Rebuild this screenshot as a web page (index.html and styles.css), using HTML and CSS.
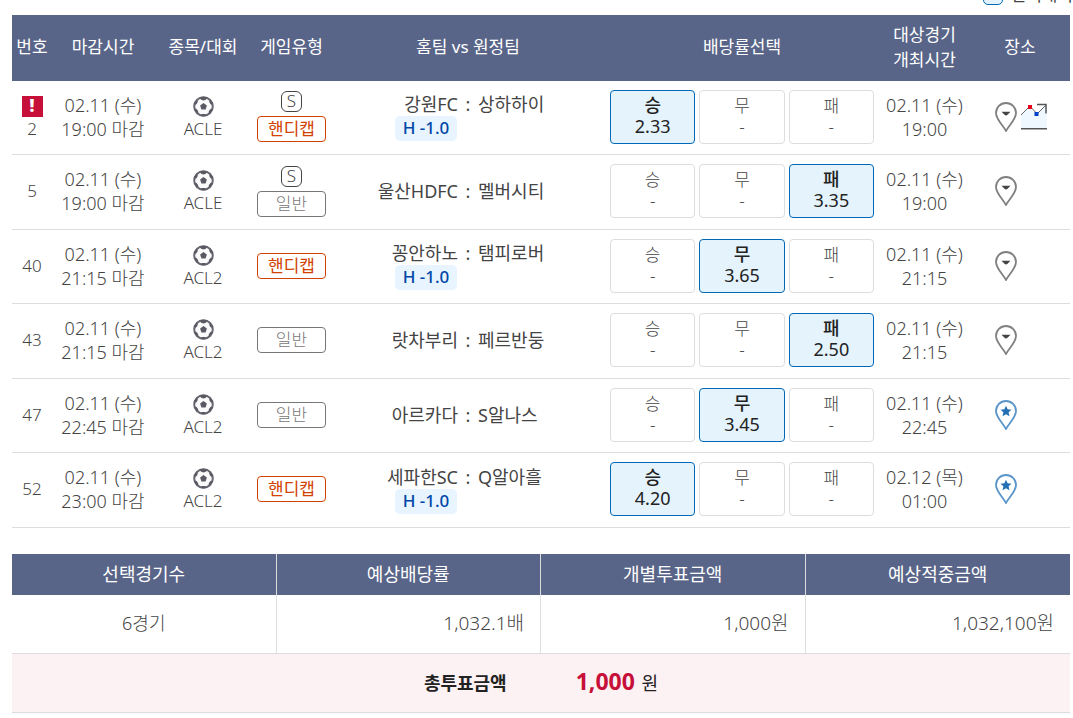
FILE: index.html
```html
<!DOCTYPE html>
<html lang="ko">
<head>
<meta charset="utf-8">
<title>투표 내역</title>
<link rel="stylesheet" href="styles.css">
</head>
<body>
<svg class="defs" aria-hidden="true">
  <symbol id="ball" viewBox="0 0 21 21">
    <circle cx="10.5" cy="10.5" r="9.300" fill="#fafafa" stroke="#686870" stroke-width="2"/>
    <path fill="#5a5a64" d="M10.500 7l3.400 2.500-1.300 4H8.400l-1.300-4zM6.500 1.500q4-1.300 8 0l-1.600 2.200-2.400.9-2.400-.9zM17 3.200q2.600 2.400 3.200 5.600l-2.600-.6-1.400-2.200zM4 3.200Q1.400 5.600.8 8.800l2.600-.6L4.800 6zM1 12.600l2.600.5 1.600 2.100.1 3Q2 16.200 1 12.600zM20 12.600l-2.600.5-1.600 2.100-.1 3q3.300-2 4.300-5.600zM7.600 20l1.300-2h3.200l1.300 2q-2.900.7-5.800 0z"/>
  </symbol>
  <symbol id="pin" viewBox="0 0 22 30">
    <path fill="#fff" stroke="#808080" stroke-width="1.800" d="M11 29C9 24.500 1 17.500 1 11a10 10 0 0 1 20 0c0 6.500-8 13.500-10 18z"/>
    <path fill="#444" d="M6.500 9.800h9l-3 3q-1.500 1.200-3 0z"/>
  </symbol>
  <symbol id="starpin" viewBox="0 0 22 30">
    <path fill="#fff" stroke="#5a95ca" stroke-width="1.800" d="M11 29C9 24.500 1 17.500 1 11a10 10 0 0 1 20 0c0 6.500-8 13.500-10 18z"/>
    <path fill="#2470b5" d="M11 5.800l1.600 3.500 3.900.4-2.900 2.600.9 3.900-3.500-2-3.500 2 .9-3.900-2.900-2.600 3.900-.4z"/>
  </symbol>
</svg>
<div class="legend"><label class="legend-item"><input type="checkbox" class="legend-box">선택내역</label></div>
<main class="page">
<table class="games">
  <colgroup><col class="c-no"><col class="c-close"><col class="c-league"><col class="c-type"><col class="c-teams"><col class="c-odds"><col class="c-date"><col class="c-place"></colgroup>
  <thead><tr><th>번호</th><th>마감시간</th><th>종목/대회</th><th>게임유형</th><th>홈팀 vs 원정팀</th><th>배당률선택</th><th>대상경기<br>개최시간</th><th>장소</th></tr></thead>
  <tbody>
    <tr>
      <td><span class="alert">!</span><span class="no">2</span></td>
      <td class="date">02.11 (수)<br>19:00 마감</td>
      <td><svg class="ball"><use href="#ball"/></svg>ACLE</td>
      <td><span class="single">S</span><span class="type handicap">핸디캡</span></td>
      <td><div class="teams"><span class="home">강원FC</span><span>:</span><span>상하하이</span><span class="point">H -1.0</span></div></td>
      <td><div class="odds"><button class="odd on">승<b>2.33</b></button><button class="odd">무<b>-</b></button><button class="odd">패<b>-</b></button></div></td>
      <td class="date">02.11 (수)<br>19:00</td>
      <td><div class="place"><svg class="pin"><use href="#pin"/></svg><svg class="chart" viewBox="0 0 26 27"><path fill="#eff7ff" d="M0 12L8 4l7 7 9-8 2 2v20H0z"/><path fill="none" stroke="#666" d="M0 12L9 3l7 8 9-9"/><path fill="none" stroke="#555" stroke-width="1.500" d="M16 1.500h9v9"/><path fill="#555" d="M0 25h26v1.500H0z"/><path fill="#e8001c" d="M7 2h4v4H7z"/><path fill="#0040c8" d="M13.500 9h4v4h-4z"/></svg></div></td>
    </tr>
    <tr>
      <td>5</td>
      <td class="date">02.11 (수)<br>19:00 마감</td>
      <td><svg class="ball"><use href="#ball"/></svg>ACLE</td>
      <td><span class="single">S</span><span class="type">일반</span></td>
      <td><div class="teams"><span class="home">울산HDFC</span><span>:</span><span>멜버시티</span></div></td>
      <td><div class="odds"><button class="odd">승<b>-</b></button><button class="odd">무<b>-</b></button><button class="odd on">패<b>3.35</b></button></div></td>
      <td class="date">02.11 (수)<br>19:00</td>
      <td><div class="place"><svg class="pin"><use href="#pin"/></svg></div></td>
    </tr>
    <tr>
      <td>40</td>
      <td class="date">02.11 (수)<br>21:15 마감</td>
      <td><svg class="ball"><use href="#ball"/></svg>ACL2</td>
      <td><span class="type handicap">핸디캡</span></td>
      <td><div class="teams"><span class="home">꽁안하노</span><span>:</span><span>탬피로버</span><span class="point">H -1.0</span></div></td>
      <td><div class="odds"><button class="odd">승<b>-</b></button><button class="odd on">무<b>3.65</b></button><button class="odd">패<b>-</b></button></div></td>
      <td class="date">02.11 (수)<br>21:15</td>
      <td><div class="place"><svg class="pin"><use href="#pin"/></svg></div></td>
    </tr>
    <tr>
      <td>43</td>
      <td class="date">02.11 (수)<br>21:15 마감</td>
      <td><svg class="ball"><use href="#ball"/></svg>ACL2</td>
      <td><span class="type">일반</span></td>
      <td><div class="teams"><span class="home">랏차부리</span><span>:</span><span>페르반둥</span></div></td>
      <td><div class="odds"><button class="odd">승<b>-</b></button><button class="odd">무<b>-</b></button><button class="odd on">패<b>2.50</b></button></div></td>
      <td class="date">02.11 (수)<br>21:15</td>
      <td><div class="place"><svg class="pin"><use href="#pin"/></svg></div></td>
    </tr>
    <tr>
      <td>47</td>
      <td class="date">02.11 (수)<br>22:45 마감</td>
      <td><svg class="ball"><use href="#ball"/></svg>ACL2</td>
      <td><span class="type">일반</span></td>
      <td><div class="teams"><span class="home">아르카다</span><span>:</span><span>S알나스</span></div></td>
      <td><div class="odds"><button class="odd">승<b>-</b></button><button class="odd on">무<b>3.45</b></button><button class="odd">패<b>-</b></button></div></td>
      <td class="date">02.11 (수)<br>22:45</td>
      <td><div class="place"><svg class="pin"><use href="#starpin"/></svg></div></td>
    </tr>
    <tr>
      <td>52</td>
      <td class="date">02.11 (수)<br>23:00 마감</td>
      <td><svg class="ball"><use href="#ball"/></svg>ACL2</td>
      <td><span class="type handicap">핸디캡</span></td>
      <td><div class="teams"><span class="home">세파한SC</span><span>:</span><span>Q알아흘</span><span class="point">H -1.0</span></div></td>
      <td><div class="odds"><button class="odd on">승<b>4.20</b></button><button class="odd">무<b>-</b></button><button class="odd">패<b>-</b></button></div></td>
      <td class="date">02.12 (목)<br>01:00</td>
      <td><div class="place"><svg class="pin"><use href="#starpin"/></svg></div></td>
    </tr>
  </tbody>
</table>
<table class="summary">
  <thead><tr><th>선택경기수</th><th>예상배당률</th><th>개별투표금액</th><th>예상적중금액</th></tr></thead>
  <tbody><tr><td class="count">6경기</td><td>1,032.1배</td><td>1,000원</td><td>1,032,100원</td></tr></tbody>
  <tfoot><tr><td colspan="4"><div class="total"><strong>총투표금액</strong><span><strong class="amount">1,000</strong> 원</span></div></td></tr></tfoot>
</table>
</main>
</body>
</html>
```
FILE: styles.css
```css
* { box-sizing: border-box; }
body {
  margin: 0;
  background: #fff;
  color: #444;
  font: 300 17px/24px "Noto Sans", "Noto Sans CJK KR", sans-serif;
  overflow: hidden;
}
.defs { position: absolute; width: 0; height: 0; }
.legend {
  height: 15px;
  display: flex;
  justify-content: flex-end;
  align-items: flex-end;
  overflow: hidden;
}
.legend-item {
  display: flex;
  align-items: center;
  gap: 7px;
  padding-bottom: 8px;
  font-weight: 400;
  white-space: nowrap;
}
.legend-box {
  appearance: none;
  width: 20px;
  height: 20px;
  margin: 0;
  border: 1px solid #0068b7;
  border-radius: 5px;
  background: #e4f2fc;
}
.page { padding: 0 3px 0 12px; }
table { width: 100%; border-collapse: separate; border-spacing: 0; table-layout: fixed; }
th, td { padding: 0; text-align: center; white-space: nowrap; }
th { background: #596588; color: #fff; font-weight: 400; }

.games th { height: 66px; padding-bottom: 3px; line-height: 25px; }
.games td { height: 74px; padding-bottom: 2px; border-bottom: 1px solid #ddd; }
.games tr:nth-child(even) td { height: 75px; }
.games .date { font-size: 18px; }
.c-no { width: 40px; }
.c-close { width: 102px; }
.c-league { width: 98px; }
.c-type { width: 79px; }
.c-date { width: 91px; }
.c-place { width: 100px; }

.alert {
  display: block;
  width: 21px;
  height: 21px;
  margin: 3px auto 0;
  background: #c60f39;
  color: #fff;
  font-weight: 900;
  line-height: 20px;
}
.no { display: block; }
.ball { display: block; width: 21px; height: 21px; margin: 3px auto 0; }
.single {
  display: block;
  width: 21px;
  height: 21px;
  margin: 0 auto 4px;
  border: 1px solid #444;
  border-radius: 6px;
  line-height: 18px;
}
.type {
  display: block;
  width: 69px;
  height: 26px;
  margin: 0 auto;
  border: 1px solid #777;
  border-radius: 4px;
  color: #777;
}
.handicap { border-color: #d14200; color: #d14200; font-weight: 400; }

.teams {
  display: grid;
  grid-template-columns: 1fr 20px 1fr;
  align-items: center;
  font-size: 18px;
  font-weight: 400;
  text-align: left;
}
.teams > :nth-child(2) { text-align: center; }
.home { text-align: right; }
.point {
  justify-self: end;
  width: 62px;
  height: 25px;
  margin-right: 1px;
  border-radius: 5px;
  background: #e8f4ff;
  color: #0047a8;
  font-size: 17px;
  font-weight: 500;
  text-align: center;
}

.odds { display: grid; grid-template-columns: repeat(3, 1fr); gap: 4px; padding: 0 5px; }
.odd {
  height: 54px;
  padding: 0 0 2px;
  border: 1px solid #ddd;
  border-radius: 4px;
  background: #fff;
  color: #444;
  font: inherit;
  line-height: 21px;
}
.odd b { display: block; font-weight: inherit; }
.on { border-color: #0068b7; background: #e4f3fc; color: #222; font-size: 18px; font-weight: 500; }
.on b { font-weight: 400; }

.place { display: flex; align-items: center; gap: 4px; padding-left: 25px; }
.pin { width: 22px; height: 30px; }
.chart { width: 26px; height: 27px; }

.summary { margin-top: 26px; font-size: 18px; }
.summary th { height: 41px; padding-bottom: 2px; }
.summary th, .summary td { border-right: 1px solid #ddd; }
.summary th:last-child, .summary td:last-child { border-right: 0; }
.summary td { height: 59px; padding: 0 16px 2px 0; border-bottom: 1px solid #ddd; font-size: 19px; text-align: right; }
.summary .count { padding-right: 0; font-size: 18px; text-align: center; }
.summary tfoot td { padding: 0 0 2px; background: #fcf1f3; color: #222; font-size: 18px; }
.total { display: flex; justify-content: center; align-items: baseline; gap: 69px; font-weight: 400; }
.total strong { font-weight: 700; }
.total .amount { margin-right: 2px; color: #c60f39; font-size: 23px; }
```
